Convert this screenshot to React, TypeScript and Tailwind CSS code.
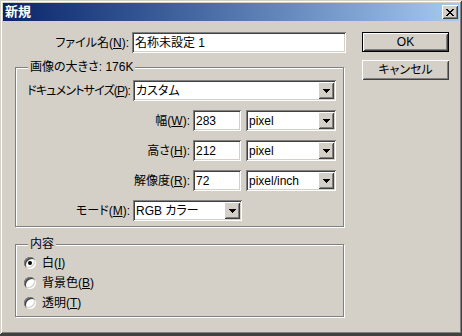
import React from "react";

const font = "font-['Liberation_Sans','Noto_Sans_CJK_JP',sans-serif] [font-feature-settings:'palt']";
const sunken =
  "bg-white shadow-[inset_1px_1px_0_#808080,inset_-1px_-1px_0_#fff,inset_2px_2px_0_#404040,inset_-2px_-2px_0_#d4d0c8]";
const raised =
  "bg-[#d4d0c8] shadow-[inset_1px_1px_0_#fff,inset_-1px_-1px_0_#404040,inset_2px_2px_0_#d4d0c8,inset_-2px_-2px_0_#808080]";

const xGlyph = [
  "XX....XX",
  ".XX..XX.",
  "..XXXX..",
  "...XX...",
  "..XXXX..",
  ".XX..XX.",
  "XX....XX",
];

function CloseGlyph() {
  return (
    <svg width="8" height="7" shapeRendering="crispEdges">
      {xGlyph.flatMap((row, y) =>
        row.split("").map((c, x) => (c === "X" ? <rect key={`${x}-${y}`} x={x} y={y} width="1" height="1" fill="#000" /> : null))
      )}
    </svg>
  );
}

function Arrow() {
  return (
    <svg width="7" height="4" shapeRendering="crispEdges">
      <rect x="0" y="0" width="7" height="1" fill="#000" />
      <rect x="1" y="1" width="5" height="1" fill="#000" />
      <rect x="2" y="2" width="3" height="1" fill="#000" />
      <rect x="3" y="3" width="1" height="1" fill="#000" />
    </svg>
  );
}

function Select({ value, className }: { value: string; className: string }) {
  return (
    <div className={`${sunken} ${className} flex h-[21px] items-center pl-[3px] pr-[2px]`}>
      <span className="flex-1 truncate leading-[14px]">{value}</span>
      <div className={`${raised} flex h-[17px] w-[16px] items-center justify-center`}>
        <Arrow />
      </div>
    </div>
  );
}

function Field({ value, className }: { value: string; className: string }) {
  return (
    <div className={`${sunken} ${className} flex h-[21px] items-center pl-[3px]`}>
      <span className="leading-[14px]">{value}</span>
    </div>
  );
}

function Label({ text, mn, className }: { text: string; mn: string; className: string }) {
  return (
    <div className={`${className} shrink-0 pr-[3px] text-right leading-[14px] whitespace-nowrap`}>
      {text}(<span className="underline underline-offset-1">{mn}</span>):
    </div>
  );
}

function Radio({ checked, text, mn }: { checked?: boolean; text: string; mn: string }) {
  return (
    <div className="flex h-[12px] items-center gap-[6px]">
      <div className="flex h-[12px] w-[12px] items-center justify-center rounded-full bg-white shadow-[inset_1px_1px_0_#808080,inset_-1px_-1px_0_#fff,inset_2px_2px_0_#404040,inset_-2px_-2px_0_#d4d0c8]">
        {checked && <div className="h-[4px] w-[4px] rounded-full bg-black" />}
      </div>
      <span className="leading-[14px] whitespace-nowrap">
        {text}(<span className="underline underline-offset-1">{mn}</span>)
      </span>
    </div>
  );
}

export default function App() {
  return (
    <div className={`h-[336px] w-[462px] bg-[#404040] text-[12px] text-black ${font}`}>
      <div className="h-[334px] w-[462px] bg-[#d4d0c8] px-[3px] pt-[3px] shadow-[inset_1px_1px_0_#d4d0c8,inset_-1px_-1px_0_#404040,inset_2px_2px_0_#fff,inset_-2px_-2px_0_#808080]">
        {/* title bar */}
        <div className="flex h-[18px] items-center justify-between bg-gradient-to-r from-[#0a246a] to-[#a6caf0] pl-[2px] pr-[1px]">
          <span className="text-[13px] font-bold leading-[14px] text-white">新規</span>
          <div className={`${raised} flex h-[14px] w-[16px] items-center justify-center`}>
            <CloseGlyph />
          </div>
        </div>

        <div className="mt-[11px] flex gap-[16px]">
          {/* left column */}
          <div className="w-[343px]">
            <div className="flex h-[21px] items-center">
              <Label text="ファイル名" mn="N" className="w-[129px]" />
              <Field value="名称未設定 1" className="w-[214px]" />
            </div>

            <div className="relative ml-[12px] mt-[14px] w-[329px] border border-[#808080] pb-[5px] pt-[12px] shadow-[1px_1px_0_#fff,inset_1px_1px_0_#fff]">
              <span className="absolute -top-[8px] left-[12px] bg-[#d4d0c8] px-[2px] leading-[14px]">画像の大きさ: 176K</span>
              <div className="flex flex-col gap-[9px]">
                <div className="flex items-center">
                  <Label text="ドキュメントサイズ" mn="P" className="w-[117px] tracking-[-0.8px]" />
                  <Select value="カスタム" className="w-[203px]" />
                </div>
                <div className="flex items-center">
                  <Label text="幅" mn="W" className="w-[177px]" />
                  <Field value="283" className="w-[48px]" />
                  <Select value="pixel" className="ml-[5px] w-[90px]" />
                </div>
                <div className="flex items-center">
                  <Label text="高さ" mn="H" className="w-[177px]" />
                  <Field value="212" className="w-[48px]" />
                  <Select value="pixel" className="ml-[5px] w-[90px]" />
                </div>
                <div className="flex items-center">
                  <Label text="解像度" mn="R" className="w-[177px]" />
                  <Field value="72" className="w-[48px]" />
                  <Select value="pixel/inch" className="ml-[5px] w-[90px]" />
                </div>
                <div className="flex items-center">
                  <Label text="モード" mn="M" className="w-[117px]" />
                  <Select value="RGB カラー" className="w-[109px]" />
                </div>
              </div>
            </div>

            <div className="relative ml-[12px] mt-[17px] w-[329px] border border-[#808080] pb-[7px] pl-[8px] pt-[12px] shadow-[1px_1px_0_#fff,inset_1px_1px_0_#fff]">
              <span className="absolute -top-[8px] left-[12px] bg-[#d4d0c8] px-[2px] leading-[14px]">内容</span>
              <div className="flex flex-col gap-[8px]">
                <Radio checked text="白" mn="I" />
                <Radio text="背景色" mn="B" />
                <Radio text="透明" mn="T" />
              </div>
            </div>
          </div>

          {/* buttons */}
          <div className="flex flex-col gap-[8px]">
            <div className="h-[20px] w-[87px] border border-black">
              <div className={`${raised} flex h-full w-full items-center justify-center leading-[14px]`}>OK</div>
            </div>
            <div className={`${raised} flex h-[20px] w-[87px] items-center justify-center leading-[14px]`}>キャンセル</div>
          </div>
        </div>
      </div>
    </div>
  );
}
